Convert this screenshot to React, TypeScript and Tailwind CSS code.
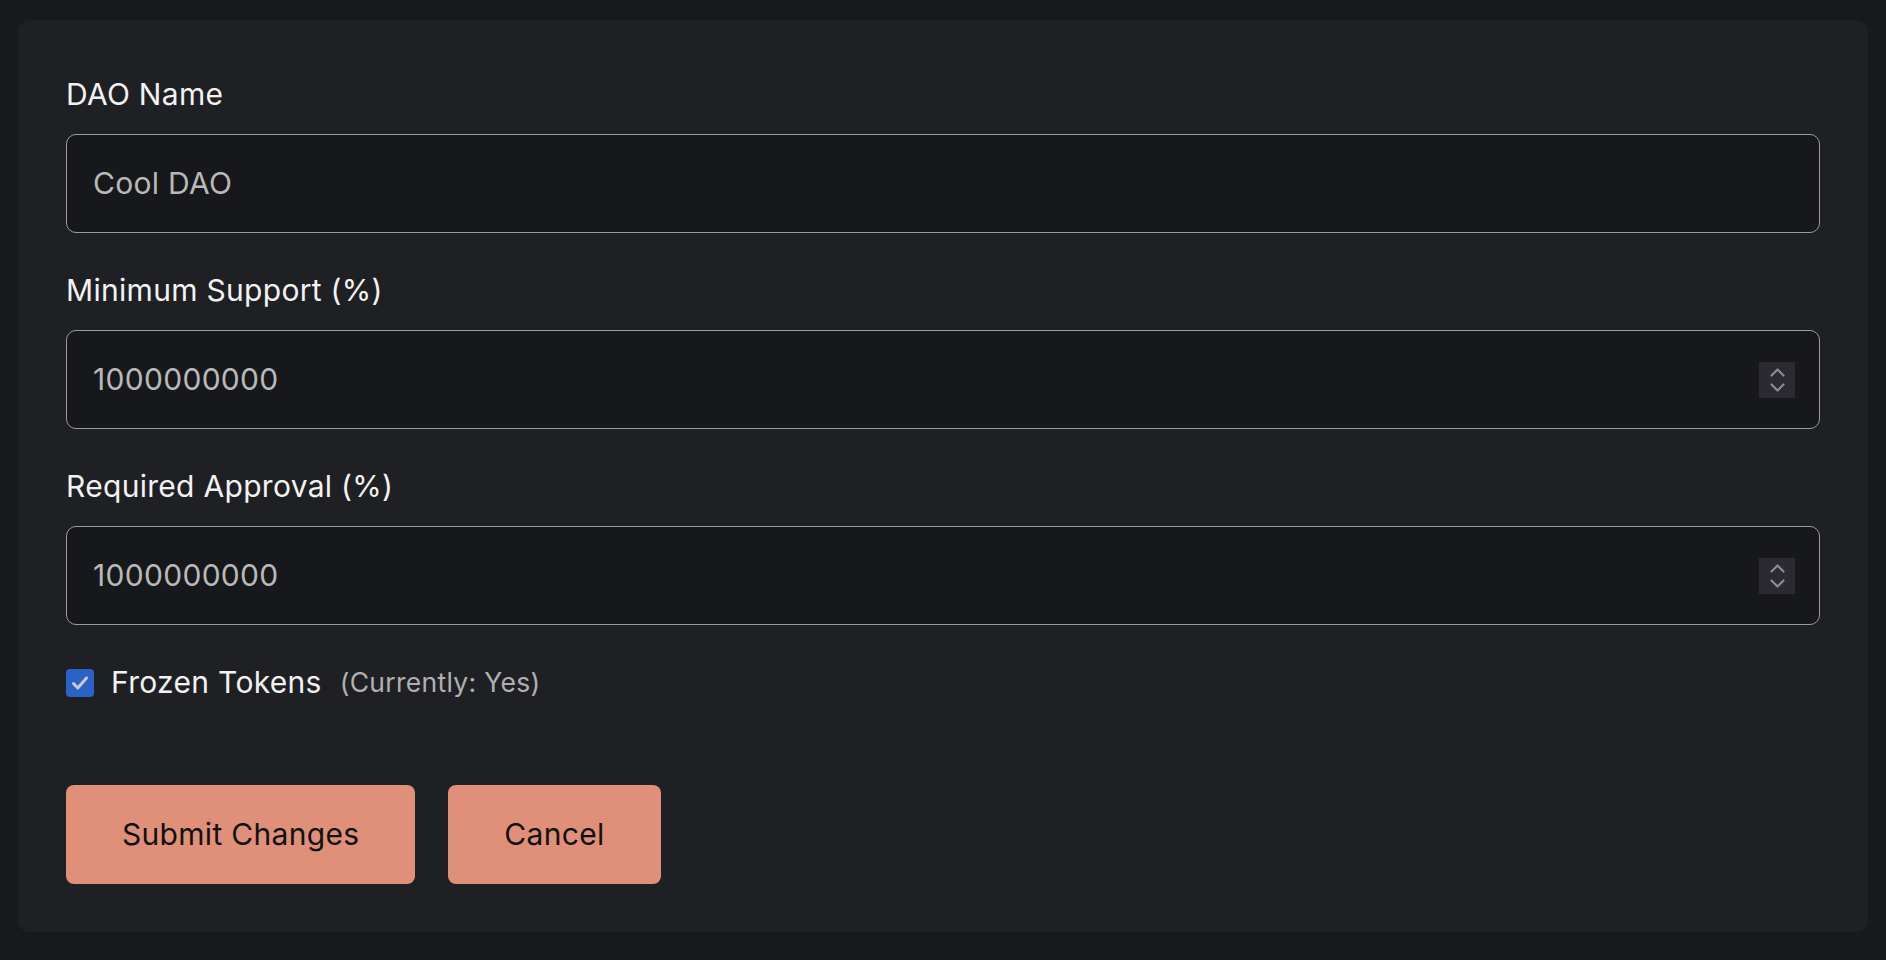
import { useState } from 'react'

const font = { fontFamily: 'Inter, "Noto Sans", sans-serif' }

function Spinner() {
  return (
    <div className="flex h-[36px] w-[36px] flex-col items-center justify-center gap-[6px] bg-[#2b2a31]">
      <svg width="15" height="9" viewBox="0 0 15 9" fill="none">
        <path d="M1.5 7.5L7.5 1.5L13.5 7.5" stroke="#8d8b95" strokeWidth="2.2" strokeLinecap="round" strokeLinejoin="round" />
      </svg>
      <svg width="15" height="9" viewBox="0 0 15 9" fill="none">
        <path d="M1.5 1.5L7.5 7.5L13.5 1.5" stroke="#8d8b95" strokeWidth="2.2" strokeLinecap="round" strokeLinejoin="round" />
      </svg>
    </div>
  )
}

function Field({
  label,
  value,
  onChange,
  number,
}: {
  label: string
  value: string
  onChange: (v: string) => void
  number?: boolean
}) {
  return (
    <div className="flex flex-col">
      <label className="mb-[17px] text-[30px] leading-[45px] tracking-[0.3px] text-[#f2f2f2]">{label}</label>
      <div className="flex h-[99px] items-center rounded-[10px] border-[1.5px] border-[#9c9c9c] bg-[#17181c] pl-[26px] pr-[24px]">
        <input
          value={value}
          onChange={(e) => onChange(e.target.value)}
          className="min-w-0 flex-1 bg-transparent text-[30px] tracking-[0.3px] text-[#b9b9b9] outline-none"
          style={font}
        />
        {number && <Spinner />}
      </div>
    </div>
  )
}

export default function App() {
  const [name, setName] = useState('Cool DAO')
  const [support, setSupport] = useState('1000000000')
  const [approval, setApproval] = useState('1000000000')
  const [frozen, setFrozen] = useState(true)

  return (
    <div className="min-h-screen bg-[#18191d] px-[18px] pt-[20px] pb-[29px]" style={font}>
      <div className="flex flex-col gap-[35px] rounded-[12px] bg-[#1f2024] px-[48px] pt-[52px] pb-[48px]">
        <Field label="DAO Name" value={name} onChange={setName} />
        <Field label="Minimum Support (%)" value={support} onChange={setSupport} number />
        <Field label="Required Approval (%)" value={approval} onChange={setApproval} number />

        {/* Frozen tokens */}
        <div className="flex h-[45px] items-center">
          <button
            onClick={() => setFrozen(!frozen)}
            className={`flex h-[28px] w-[28px] items-center justify-center rounded-[4px] ${frozen ? 'bg-[#2a62c5]' : 'border-2 border-[#9c9c9c]'}`}
          >
            {frozen && (
              <svg width="18" height="16" viewBox="0 0 18 16" fill="none">
                <path d="M2.5 8.5L6.8 13L15.5 3" stroke="#c9cbd3" strokeWidth="3" strokeLinecap="round" strokeLinejoin="round" />
              </svg>
            )}
          </button>
          <span className="ml-[17px] text-[30px] tracking-[0.3px] text-[#f2f2f2]">Frozen Tokens</span>
          <span className="ml-[18px] text-[26.5px] tracking-[0.3px] text-[#b0b0b0]">(Currently: {frozen ? 'Yes' : 'No'})</span>
        </div>

        <div className="mt-[45px] flex gap-[33px]">
          <button className="h-[99px] rounded-[8px] bg-[#e09078] px-[56px] text-[30px] tracking-[0.3px] text-[#111111]">
            Submit Changes
          </button>
          <button className="h-[99px] rounded-[8px] bg-[#e09078] px-[56px] text-[30px] tracking-[0.3px] text-[#111111]">
            Cancel
          </button>
        </div>
      </div>
    </div>
  )
}
